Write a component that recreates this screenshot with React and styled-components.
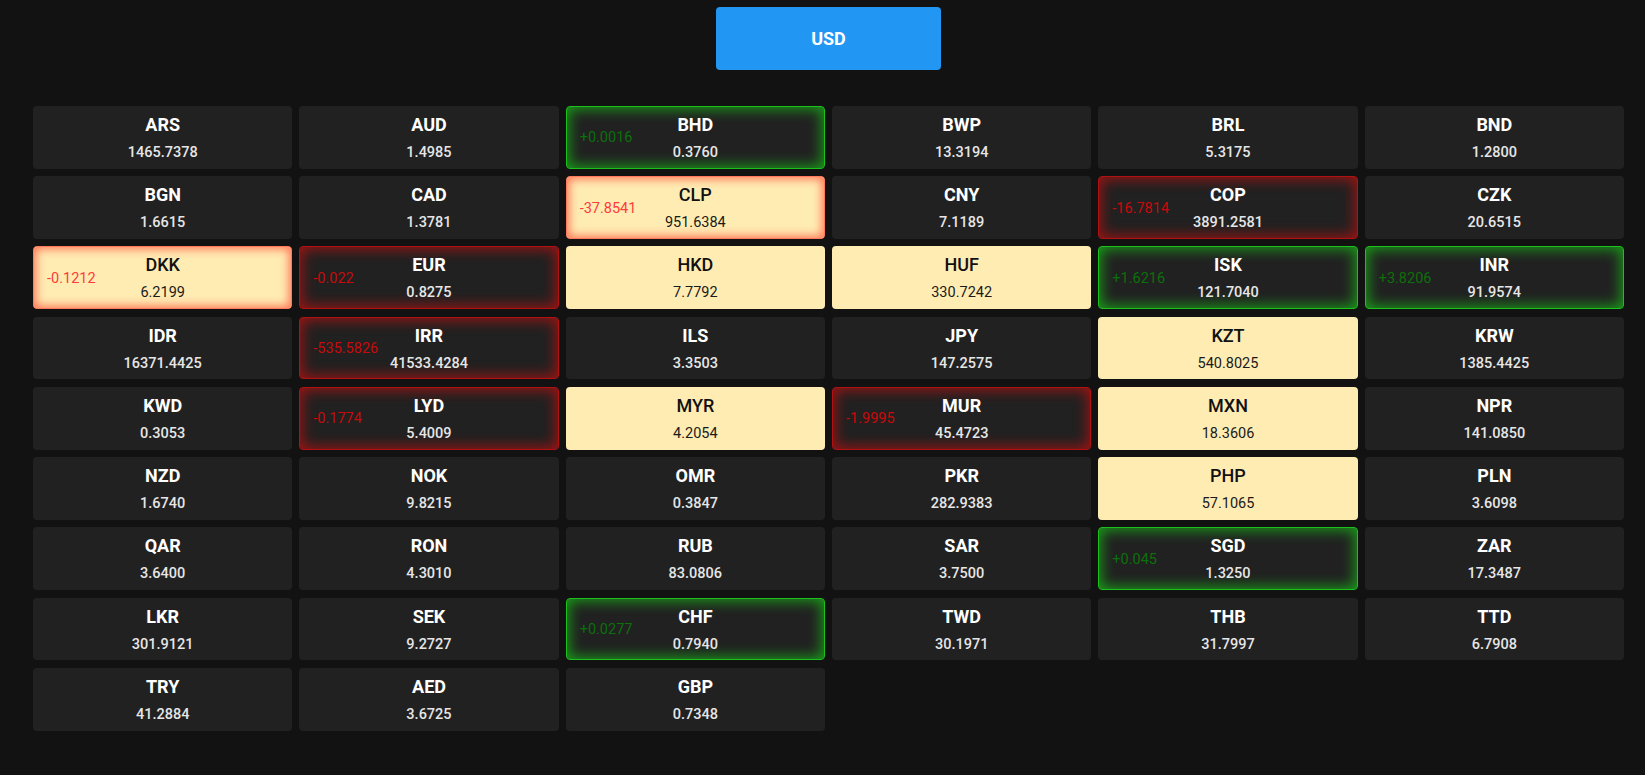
import React from 'react';
import styled, { createGlobalStyle, css } from 'styled-components';

const GlobalStyle = createGlobalStyle`
  html, body {
    margin: 0;
    padding: 0;
    background: #121212;
    font-family: Roboto, "Noto Sans", "Liberation Sans", sans-serif;
  }
`;

const rates = [
  ['ARS', '1465.7378'], ['AUD', '1.4985'], ['BHD', '0.3760', 'up', '+0.0016'], ['BWP', '13.3194'], ['BRL', '5.3175'], ['BND', '1.2800'],
  ['BGN', '1.6615'], ['CAD', '1.3781'], ['CLP', '951.6384', 'down', '-37.8541', true], ['CNY', '7.1189'], ['COP', '3891.2581', 'down', '-16.7814'], ['CZK', '20.6515'],
  ['DKK', '6.2199', 'down', '-0.1212', true], ['EUR', '0.8275', 'down', '-0.022'], ['HKD', '7.7792', null, null, true], ['HUF', '330.7242', null, null, true], ['ISK', '121.7040', 'up', '+1.6216'], ['INR', '91.9574', 'up', '+3.8206'],
  ['IDR', '16371.4425'], ['IRR', '41533.4284', 'down', '-535.5826'], ['ILS', '3.3503'], ['JPY', '147.2575'], ['KZT', '540.8025', null, null, true], ['KRW', '1385.4425'],
  ['KWD', '0.3053'], ['LYD', '5.4009', 'down', '-0.1774'], ['MYR', '4.2054', null, null, true], ['MUR', '45.4723', 'down', '-1.9995'], ['MXN', '18.3606', null, null, true], ['NPR', '141.0850'],
  ['NZD', '1.6740'], ['NOK', '9.8215'], ['OMR', '0.3847'], ['PKR', '282.9383'], ['PHP', '57.1065', null, null, true], ['PLN', '3.6098'],
  ['QAR', '3.6400'], ['RON', '4.3010'], ['RUB', '83.0806'], ['SAR', '3.7500'], ['SGD', '1.3250', 'up', '+0.045'], ['ZAR', '17.3487'],
  ['LKR', '301.9121'], ['SEK', '9.2727'], ['CHF', '0.7940', 'up', '+0.0277'], ['TWD', '30.1971'], ['THB', '31.7997'], ['TTD', '6.7908'],
  ['TRY', '41.2884'], ['AED', '3.6725'], ['GBP', '0.7348'],
];

const Page = styled.div`
  min-height: 100vh;
  box-sizing: border-box;
  padding: 7px 21px 20px 33px;
  display: flex;
  flex-direction: column;
  align-items: center;
`;

const BaseButton = styled.button`
  width: 225px;
  height: 62.7px;
  border: none;
  border-radius: 4px;
  background: #2196f3;
  color: #fff;
  font-family: Roboto, sans-serif;
  font-weight: 700;
  font-size: 18px;
  cursor: pointer;
  margin-bottom: 36.3px;
`;

const Grid = styled.div`
  width: 100%;
  display: grid;
  grid-template-columns: repeat(6, 1fr);
  grid-auto-rows: 62.75px;
  column-gap: 7px;
  row-gap: 7.5px;
`;

const glow = {
  up: css`
    border-color: #1cc21c;
    box-shadow: inset 0 0 14px 2px rgba(24, 190, 24, 0.8);
  `,
  down: css`
    border-color: #b01212;
    box-shadow: inset 0 0 14px 2px rgba(180, 16, 16, 0.85);
  `,
  downLight: css`
    border-color: #ff7a5c;
    box-shadow: inset 0 0 10px 2px rgba(255, 110, 80, 0.95);
  `,
};

const Card = styled.div`
  position: relative;
  box-sizing: border-box;
  border-radius: 4px;
  border: 1px solid transparent;
  background: ${(p) => (p.$light ? '#ffecb3' : '#212121')};
  display: flex;
  flex-direction: column;
  align-items: center;
  justify-content: center;
  gap: 7px;
  padding-top: 2px;
  ${(p) => p.$trend === 'up' && glow.up}
  ${(p) => p.$trend === 'down' && (p.$light ? glow.downLight : glow.down)}
`;

const Code = styled.div`
  font-size: 18px;
  line-height: 22px;
  font-weight: ${(p) => (p.$light ? 500 : 700)};
  color: ${(p) => (p.$light ? '#111' : '#fff')};
`;

const Value = styled.div`
  font-size: 14.5px;
  line-height: 20px;
  font-weight: ${(p) => (p.$light ? 400 : 500)};
  color: ${(p) => (p.$light ? '#1a1a1a' : '#e6e6e6')};
`;

const Change = styled.span`
  position: absolute;
  left: 13px;
  top: 50%;
  transform: translateY(-50%);
  font-size: 14.5px;
  color: ${(p) => (p.$trend === 'up' ? '#0b700b' : p.$light ? '#ff3a3a' : '#c80a0a')};
`;

const RateCard = ({ code, value, trend, change, light }) => (
  <Card $trend={trend} $light={light}>
    {change && (
      <Change $trend={trend} $light={light}>
        {change}
      </Change>
    )}
    <Code $light={light}>{code}</Code>
    <Value $light={light}>{value}</Value>
  </Card>
);

export default function App() {
  return (
    <>
      <GlobalStyle />
      <Page>
        <BaseButton>USD</BaseButton>
        <Grid>
          {rates.map(([code, value, trend, change, light]) => (
            <RateCard key={code} code={code} value={value} trend={trend} change={change} light={light} />
          ))}
        </Grid>
      </Page>
    </>
  );
}
